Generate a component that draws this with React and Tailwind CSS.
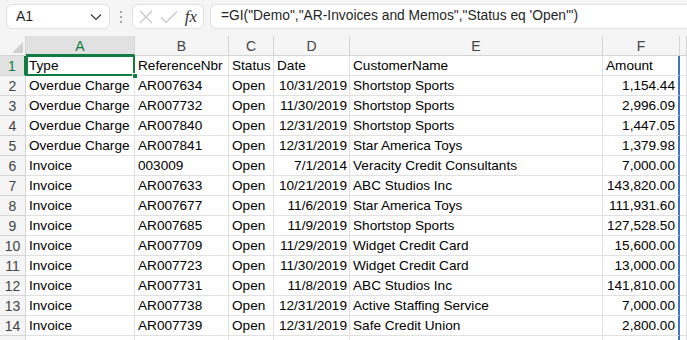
import React from "react";

const rows = [
  ["Overdue Charge", "AR007634", "Open", "10/31/2019", "Shortstop Sports", "1,154.44"],
  ["Overdue Charge", "AR007732", "Open", "11/30/2019", "Shortstop Sports", "2,996.09"],
  ["Overdue Charge", "AR007840", "Open", "12/31/2019", "Shortstop Sports", "1,447.05"],
  ["Overdue Charge", "AR007841", "Open", "12/31/2019", "Star America Toys", "1,379.98"],
  ["Invoice", "003009", "Open", "7/1/2014", "Veracity Credit Consultants", "7,000.00"],
  ["Invoice", "AR007633", "Open", "10/21/2019", "ABC Studios Inc", "143,820.00"],
  ["Invoice", "AR007677", "Open", "11/6/2019", "Star America Toys", "111,931.60"],
  ["Invoice", "AR007685", "Open", "11/9/2019", "Shortstop Sports", "127,528.50"],
  ["Invoice", "AR007709", "Open", "11/29/2019", "Widget Credit Card", "15,600.00"],
  ["Invoice", "AR007723", "Open", "11/30/2019", "Widget Credit Card", "13,000.00"],
  ["Invoice", "AR007731", "Open", "11/8/2019", "ABC Studios Inc", "141,810.00"],
  ["Invoice", "AR007738", "Open", "12/31/2019", "Active Staffing Service", "7,000.00"],
  ["Invoice", "AR007739", "Open", "12/31/2019", "Safe Credit Union", "2,800.00"],
  ["", "", "", "", "", ""],
];

const cols = "grid grid-cols-[26px_109px_94px_45px_76px_253px_77px_1fr]";
const cell = "h-[20px] leading-[20px] border-r border-b border-[#e1e1e1] px-[3px] whitespace-nowrap overflow-hidden text-[13.6px] text-[#000]";

export default function App() {
  return (
    <div className="w-[687px] h-[340px] overflow-hidden bg-white" style={{ fontFamily: '"Liberation Sans", Arial, sans-serif' }}>
      {/* Formula bar */}
      <div className="h-[36px] bg-[#f5f5f5] flex items-start pt-[4px] pl-[6px] gap-0">
        <div className="w-[104px] h-[25px] bg-white border border-[#e0e0e0] rounded-[6px] flex items-center justify-between pl-[9px] pr-[7px]">
          <span className="text-[14px] text-[#1f1f1f]">A1</span>
          <svg width="12" height="8" viewBox="0 0 12 8" fill="none">
            <path d="M1 1.5 L6 6.5 L11 1.5" stroke="#333" strokeWidth="1.2" />
          </svg>
        </div>
        <div className="w-[22px] h-[25px] flex flex-col items-center justify-center gap-[3px]">
          <span className="w-[2px] h-[2px] bg-[#8a8a8a] rounded-full"></span>
          <span className="w-[2px] h-[2px] bg-[#8a8a8a] rounded-full"></span>
          <span className="w-[2px] h-[2px] bg-[#8a8a8a] rounded-full"></span>
        </div>
        <div className="w-[72px] h-[25px] bg-white border border-[#e0e0e0] rounded-[6px] flex items-center pl-[5px] pr-[4px] justify-between">
          <svg width="16" height="16" viewBox="0 0 16 16" fill="none">
            <path d="M2 2 L14 14 M14 2 L2 14" stroke="#c4c4c4" strokeWidth="1.1" />
          </svg>
          <svg width="18" height="14" viewBox="0 0 18 14" fill="none">
            <path d="M1 7.5 L6 12.5 L17 1.5" stroke="#c4c4c4" strokeWidth="1.1" />
          </svg>
          <span className="text-[17px] italic text-[#333] leading-none pr-[2px]" style={{ fontFamily: '"Liberation Serif", "Times New Roman", serif' }}>fx</span>
        </div>
        <div className="ml-[6px] flex-1 h-[25px] bg-white border border-[#e0e0e0] rounded-l-[6px] border-r-0 flex items-center pl-[10px]">
          <span className="text-[13.8px] text-[#1f1f1f] whitespace-nowrap">=GI("Demo","AR-Invoices and Memos","Status eq 'Open'")</span>
        </div>
      </div>

      {/* Grid */}
      <div className={cols}>
        <div className="h-[20px] bg-[#f5f5f5] border-r border-b border-[#d4d4d4] flex items-end justify-end">
          <svg width="11" height="11" viewBox="0 0 11 11" className="mb-[2px] mr-[2px]">
            <path d="M11 0 L11 11 L0 11 Z" fill="#d0d0d0" />
          </svg>
        </div>
        {["A", "B", "C", "D", "E", "F", "G"].map((c, i) =>
          i === 0 ? (
            <div key={c} className="h-[20px] bg-[#e1e1e1] border-r border-[#d4d4d4] border-b-2 border-b-[#107c41] text-center text-[14px] leading-[20px] text-[#107c41]">{c}</div>
          ) : (
            <div key={c} className="h-[20px] bg-[#f5f5f5] border-r border-b border-[#d4d4d4] text-center text-[14px] leading-[20px] text-[#444]">{i === 6 ? "" : c}</div>
          )
        )}
      </div>

      {[["Type", "ReferenceNbr", "Status", "Date", "CustomerName", "Amount"], ...rows].map((r, idx) => {
        const n = idx + 1;
        const header = idx === 0;
        const last = n === 15;
        return (
          <div key={n} className={cols}>
            {n === 1 ? (
              <div className="h-[20px] bg-[#e1e1e1] border-r-2 border-r-[#107c41] border-b border-[#d4d4d4] text-center text-[14px] leading-[20px] text-[#107c41]">{n}</div>
            ) : (
              <div className="h-[20px] bg-[#f5f5f5] border-r border-b border-[#d4d4d4] text-center text-[14px] leading-[20px] text-[#444]">{last ? "" : n}</div>
            )}
            <div className={`${cell} relative overflow-visible`}>
              {r[0]}
              {n === 1 && (
                <>
                  <div className="absolute left-0 top-[-1px] right-[-1px] bottom-[-1px] border-2 border-[#107c41] pointer-events-none"></div>
                  <div className="absolute right-[-4px] bottom-[-4px] w-[6px] h-[6px] bg-[#107c41] border border-white z-10"></div>
                </>
              )}
            </div>
            <div className={cell}>{r[1]}</div>
            <div className={cell}>{r[2]}</div>
            <div className={`${cell} ${header ? "" : "text-right"} pr-[2px]`}>{r[3]}</div>
            <div className={cell}>{r[4]}</div>
            <div className={`${cell} ${header ? "" : "text-right"} border-r-[#4472c4] border-r-2`}>{r[5]}</div>
            <div className={cell}></div>
          </div>
        );
      })}
    </div>
  );
}
